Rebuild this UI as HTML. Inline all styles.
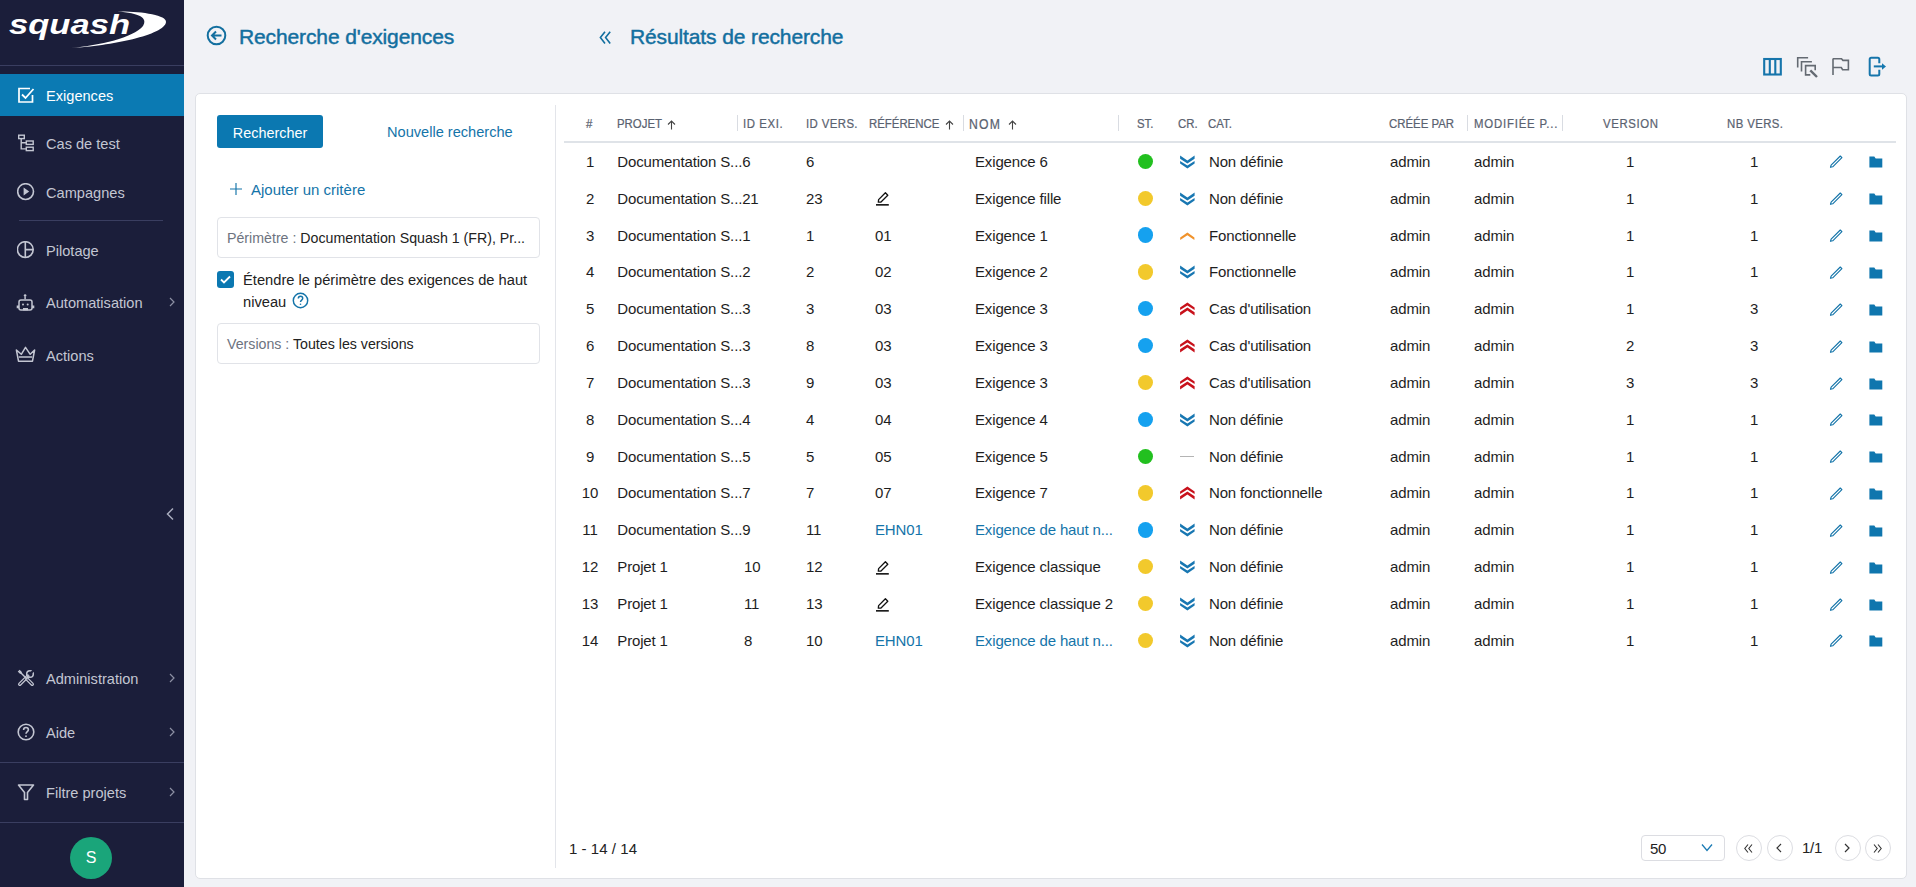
<!DOCTYPE html>
<html><head><meta charset="utf-8">
<style>
*{box-sizing:border-box;margin:0;padding:0}
html,body{width:1916px;height:887px;overflow:hidden;background:#f1f2f6;font-family:"Liberation Sans",sans-serif;}
.abs{position:absolute}
#side{position:absolute;left:0;top:0;width:184px;height:887px;background:#1b1e3a}
.sep{position:absolute;height:1px;background:#3a3e60}
.nav{position:absolute;left:0;width:184px;height:42px;color:#c3c6d2;font-size:14.6px}
.nav .t{position:absolute;left:46px;top:13.5px;white-space:nowrap}
.nav svg{position:absolute;left:17px;top:12px}
.nav .chev{position:absolute;left:167.5px;top:15px}
.nav.active{background:#0b7ab3;color:#fff}
.ttl{position:absolute;top:25px;font-size:21px;color:#136f9f;white-space:nowrap;letter-spacing:-0.12px;-webkit-text-stroke:0.45px #136f9f}
#card{position:absolute;left:195px;top:93px;width:1712px;height:786px;background:#fff;border:1px solid #dfe1e6;border-radius:5px}
.btn{position:absolute;left:217px;top:115px;width:106px;height:33px;background:#0b78b1;color:#fff;border-radius:3px;font-size:14.4px;text-align:center;line-height:36px}
.lnk{color:#1474a9}
.field{position:absolute;left:217px;width:323px;height:41px;border:1px solid #e1e3e8;border-radius:4px;font-size:14.2px;line-height:40px;padding-left:9px;white-space:nowrap;color:#222}
.field .lbl{color:#6d7380}
.hd{position:absolute;top:116.8px;font-size:11.4px;color:#5a6270;-webkit-text-stroke:0.2px #5a6270;white-space:nowrap;letter-spacing:0px;transform:scaleY(1.13);transform-origin:0 0}
.hsep{position:absolute;top:115px;width:1px;height:16px;background:#d9dce2}
.c{position:absolute;font-size:15px;color:#1e1e1e;white-space:nowrap;line-height:18px;letter-spacing:-0.15px}
.c.num{left:570px;width:40px;text-align:center}
.c.ctr{text-align:center}
.c.link{color:#1474a9}
.dot{position:absolute;width:15.4px;height:15.4px;border-radius:50%}
.ico{position:absolute}
.pgb{position:absolute;top:835px;width:26px;height:26px;border:1px solid #dcdde2;border-radius:50%}
</style></head>
<body>
<div id="side">
  <!-- logo -->
  <svg class="abs" style="left:0;top:0" width="184" height="65" viewBox="0 0 184 65">
    <text x="9" y="34" font-family="Liberation Sans" font-weight="bold" font-style="italic" font-size="27" fill="#fff" textLength="121" lengthAdjust="spacingAndGlyphs">squash</text>
    <path d="M71 48 C 110 46, 165 35, 166 22 C 167 15, 140 11, 117 11.5 C 140 13, 148 18, 143 26 C 133 38, 100 45, 71 48 Z" fill="#fff"/>
  </svg>
  <div class="sep" style="left:0;top:65px;width:184px"></div>

  <div class="nav active" style="top:74px">
    <svg width="18" height="18" viewBox="0 0 18 18"><path d="M13 2.5 H2 V16 H15.5 V9" fill="none" stroke="#fff" stroke-width="1.7"/><path d="M5 8.5 L8.5 12 L16.5 3" fill="none" stroke="#fff" stroke-width="1.8"/></svg>
    <span class="t">Exigences</span>
  </div>
  <div class="nav" style="top:122px">
    <svg width="18" height="18" viewBox="0 0 18 18" fill="none" stroke="#c3c6d2" stroke-width="1.4"><rect x="1.7" y="1.2" width="5.6" height="3.4"/><rect x="9.3" y="7" width="6.9" height="3.4"/><rect x="9.3" y="13.2" width="6.9" height="3.4"/><path d="M4.2 4.6 V14.9 H9.3 M4.2 8.7 H9.3"/></svg>
    <span class="t">Cas de test</span>
  </div>
  <div class="nav" style="top:171px">
    <svg width="18" height="18" viewBox="0 0 18 18"><circle cx="8.6" cy="8.6" r="7.9" fill="none" stroke="#c3c6d2" stroke-width="1.6"/><path d="M6.6 4.6 L12.2 8.6 L6.6 12.6 Z" fill="#c3c6d2"/></svg>
    <span class="t">Campagnes</span>
  </div>
  <div class="sep" style="left:19px;top:220px;width:144px"></div>
  <div class="nav" style="top:229px">
    <svg width="18" height="18" viewBox="0 0 18 18" fill="none" stroke="#c3c6d2" stroke-width="1.6"><circle cx="8.3" cy="8.6" r="7.9"/><path d="M8.3 0.7 V16.5 M8.3 8.6 H16.2"/></svg>
    <span class="t">Pilotage</span>
  </div>
  <div class="nav" style="top:281px">
    <svg style="left:15px;top:12px" width="21" height="20" viewBox="0 0 21 20" fill="none" stroke="#c3c6d2" stroke-width="1.5"><circle cx="10.1" cy="2.5" r="1.3" fill="#c3c6d2" stroke="none"/><path d="M10.1 3.5 V6.3"/><rect x="4" y="7" width="13" height="10" rx="2"/><path d="M1.7 12.6 H4 V15.2 H1.7 Z M17 12.6 H19.3 V15.2 H17 Z" fill="#c3c6d2" stroke="none"/><circle cx="8" cy="11.6" r="1" fill="#c3c6d2" stroke="none"/><circle cx="12.7" cy="11.6" r="1" fill="#c3c6d2" stroke="none"/><path d="M8 15 H13 V17.4 H8 Z" fill="#c3c6d2" stroke="none"/></svg>
    <span class="t">Automatisation</span>
    <svg class="chev" width="8" height="12" viewBox="0 0 8 12"><path d="M2 2 L6 6 L2 10" fill="none" stroke="#8d90a3" stroke-width="1.2"/></svg>
  </div>
  <div class="nav" style="top:334px">
    <svg style="left:15px;top:11px" width="21" height="18" viewBox="0 0 21 18" fill="none" stroke="#c3c6d2" stroke-width="1.5"><path d="M1.4 5 L6.3 9.3 L10.5 2.3 L15.2 9.3 L19.6 5 L17.5 16.2 H3.5 Z" stroke-linejoin="round"/><path d="M3.8 12 H17.2"/></svg>
    <span class="t">Actions</span>
  </div>

  <svg class="abs" style="left:164px;top:507px" width="12" height="14" viewBox="0 0 12 14"><path d="M9 1.5 L3.5 7 L9 12.5" fill="none" stroke="#a9acbd" stroke-width="1.5"/></svg>

  <div class="nav" style="top:657px">
    <svg width="18" height="18" viewBox="0 0 18 18" fill="none" stroke-linecap="round"><path d="M2.8 15.2 L10.8 7.2" stroke="#c3c6d2" stroke-width="3.6"/><path d="M2.8 15.2 L10.8 7.2" stroke="#1b1e3a" stroke-width="1.1"/><circle cx="13" cy="5" r="3.3" stroke="#c3c6d2" stroke-width="1.5"/><path d="M13.5 4.5 L17 1" stroke="#1b1e3a" stroke-width="2.2"/><path d="M10 10 L15.2 15.2" stroke="#c3c6d2" stroke-width="3.6"/><path d="M10 10 L15.2 15.2" stroke="#1b1e3a" stroke-width="1.1"/><path d="M3 3 L10 10" stroke="#c3c6d2" stroke-width="1.4"/><path d="M1.6 2.6 L2.6 1.6 L4.2 3.2 L3.2 4.2 Z" stroke="#c3c6d2" stroke-width="1.3"/></svg>
    <span class="t">Administration</span>
    <svg class="chev" width="8" height="12" viewBox="0 0 8 12"><path d="M2 2 L6 6 L2 10" fill="none" stroke="#8d90a3" stroke-width="1.2"/></svg>
  </div>
  <div class="nav" style="top:711px">
    <svg width="18" height="18" viewBox="0 0 18 18" fill="none" stroke="#c3c6d2" stroke-width="1.6"><circle cx="9" cy="9" r="7.8"/><path d="M6.6 7 C6.6 5.3 7.8 4.5 9 4.5 C10.4 4.5 11.4 5.5 11.4 6.8 C11.4 8.5 9 8.7 9 10.8"/><circle cx="9" cy="13.2" r="0.9" fill="#c3c6d2" stroke="none"/></svg>
    <span class="t">Aide</span>
    <svg class="chev" width="8" height="12" viewBox="0 0 8 12"><path d="M2 2 L6 6 L2 10" fill="none" stroke="#8d90a3" stroke-width="1.2"/></svg>
  </div>
  <div class="sep" style="left:0;top:762px;width:184px"></div>
  <div class="nav" style="top:771px">
    <svg width="18" height="18" viewBox="0 0 18 18" fill="none" stroke="#c3c6d2" stroke-width="1.6"><path d="M1.5 2 H16.5 L10.5 9.5 V16.5 H7.5 V9.5 Z" stroke-linejoin="round"/></svg>
    <span class="t">Filtre projets</span>
    <svg class="chev" width="8" height="12" viewBox="0 0 8 12"><path d="M2 2 L6 6 L2 10" fill="none" stroke="#8d90a3" stroke-width="1.2"/></svg>
  </div>
  <div class="sep" style="left:0;top:822px;width:184px"></div>
  <div class="abs" style="left:70px;top:837px;width:42px;height:42px;border-radius:50%;background:#1aa57a;color:#fff;font-size:16px;text-align:center;line-height:42px">S</div>
</div>

<!-- Titles -->
<svg class="abs" style="left:206px;top:25px" width="21" height="21" viewBox="0 0 21 21" fill="none" stroke="#136f9f" stroke-width="2"><circle cx="10.5" cy="10.5" r="8.8"/><path d="M15.5 10.5 H6.5 M10 6.5 L6 10.5 L10 14.5"/></svg>
<div class="ttl" style="left:239px">Recherche d'exigences</div>
<svg class="abs" style="left:598px;top:30px" width="15" height="15" viewBox="0 0 15 15" fill="none" stroke="#136f9f" stroke-width="1.6"><path d="M7 1.8 L2.4 7.6 L7 13.4 M12.2 1.8 L7.6 7.6 L12.2 13.4"/></svg>
<div class="ttl" style="left:630px">Résultats de recherche</div>

<!-- toolbar -->
<svg class="abs" style="left:1762px;top:56px" width="22" height="21" viewBox="0 0 22 21" fill="none" stroke="#1675ab" stroke-width="2.1"><rect x="2.2" y="3" width="16.6" height="15.5"/><path d="M7.8 3 V18.5 M13.3 3 V18.5"/></svg>
<svg class="abs" style="left:1795px;top:55px" width="24" height="24" viewBox="0 0 24 24" fill="none" stroke="#646a72" stroke-width="1.6"><path d="M2.7 12.5 V2.7 H13.1"/><path d="M6.5 16.4 V6.8 H16.9"/><path d="M15.3 19.9 H10.6 V10.6 H20.2 V15.3"/><path d="M15.3 15.3 L22 22" stroke-width="2.4"/></svg>
<svg class="abs" style="left:1830px;top:55px" width="22" height="22" viewBox="0 0 22 22" fill="none" stroke="#646a72" stroke-width="1.6"><path d="M3 20 V3.5"/><path d="M3 3.8 H11.5 L12.9 5.4 H18.4 V14.7 H12.6 L11.3 12.5 H3"/></svg>
<svg class="abs" style="left:1865px;top:55px" width="24" height="24" viewBox="0 0 24 24" fill="none" stroke="#1675ab" stroke-width="2"><path d="M14.3 8.2 V4.2 Q14.3 2.7 12.8 2.7 H6.2 Q4.7 2.7 4.7 4.2 V19 Q4.7 20.5 6.2 20.5 H12.8 Q14.3 20.5 14.3 19 V14.7"/><path d="M8.8 11.4 H18"/><path d="M17 8.2 L21 11.4 L17 14.7 Z" fill="#1478b0" stroke="none"/></svg>

<div id="card"></div>

<!-- left panel -->
<div class="btn">Rechercher</div>
<div class="abs lnk" style="left:387px;top:123.5px;font-size:14.6px;white-space:nowrap">Nouvelle recherche</div>
<svg class="abs" style="left:229px;top:182px" width="14" height="14" viewBox="0 0 14 14" stroke="#1474a9" stroke-width="1.15"><path d="M7 1 V13 M1 7 H13"/></svg>
<div class="abs lnk" style="left:251px;top:180.5px;font-size:15px;white-space:nowrap">Ajouter un critère</div>
<div class="field" style="top:217px"><span class="lbl">Périmètre : </span>Documentation Squash 1 (FR), Pr...</div>
<div class="abs" style="left:217px;top:271px;width:17px;height:17px;background:#0b78b1;border-radius:3px"></div>
<svg class="abs" style="left:217px;top:271px" width="17" height="17" viewBox="0 0 17 17"><path d="M4 8.5 L7 11.5 L13 5.5" fill="none" stroke="#fff" stroke-width="1.8"/></svg>
<div class="abs" style="left:243px;top:271.5px;font-size:14.7px;color:#222;white-space:nowrap">Étendre le périmètre des exigences de haut</div>
<div class="abs" style="left:243px;top:293.5px;font-size:14.7px;color:#222;white-space:nowrap">niveau</div>
<svg class="abs" style="left:292px;top:292px" width="17" height="17" viewBox="0 0 17 17" fill="none" stroke="#1474a9" stroke-width="1.45"><circle cx="8.5" cy="8.5" r="7.2"/><path d="M6.3 6.6 C6.3 5 7.4 4.3 8.5 4.3 C9.8 4.3 10.7 5.2 10.7 6.4 C10.7 8 8.5 8.2 8.5 10"/><circle cx="8.5" cy="12.3" r="0.8" fill="#1474a9" stroke="none"/></svg>
<div class="field" style="top:323px"><span class="lbl">Versions : </span>Toutes les versions</div>

<div class="abs" style="left:555px;top:105px;width:1px;height:763px;background:#e3e5ea"></div>

<!-- table header -->
<div class="hd" style="left:586px">#</div>
<div class="hd" style="left:617px">PROJET</div>
<svg class="abs" style="left:667px;top:119.5px" width="9" height="10" viewBox="0 0 9 10" fill="none" stroke="#444" stroke-width="1.1"><path d="M4.5 9.5 V1 M1 4.5 L4.5 1 L8 4.5"/></svg>
<div class="hsep" style="left:737px"></div>
<div class="hd" style="left:743px;letter-spacing:0.6px">ID EXI.</div>
<div class="hd" style="left:806px;letter-spacing:0.4px">ID VERS.</div>
<div class="hd" style="left:869px">RÉFÉRENCE</div>
<svg class="abs" style="left:945px;top:119.5px" width="9" height="10" viewBox="0 0 9 10" fill="none" stroke="#444" stroke-width="1.1"><path d="M4.5 9.5 V1 M1 4.5 L4.5 1 L8 4.5"/></svg>
<div class="hsep" style="left:963px"></div>
<div class="hd" style="left:969px;letter-spacing:1.2px;font-size:12.2px">NOM</div>
<svg class="abs" style="left:1008px;top:119.5px" width="9" height="10" viewBox="0 0 9 10" fill="none" stroke="#444" stroke-width="1.1"><path d="M4.5 9.5 V1 M1 4.5 L4.5 1 L8 4.5"/></svg>
<div class="hsep" style="left:1118px"></div>
<div class="hd" style="left:1137px">ST.</div>
<div class="hd" style="left:1178px">CR.</div>
<div class="hd" style="left:1208px">CAT.</div>
<div class="hd" style="left:1389px">CRÉÉE PAR</div>
<div class="hsep" style="left:1467px"></div>
<div class="hd" style="left:1474px;letter-spacing:0.8px">MODIFIÉE P...</div>
<div class="hsep" style="left:1562px"></div>
<div class="hd" style="left:1603px;letter-spacing:0.6px">VERSION</div>
<div class="hd" style="left:1727px;letter-spacing:0.4px">NB VERS.</div>
<div class="abs" style="left:564px;top:141px;width:1332px;height:2px;background:#dfe3e8"></div>

<div class="c num" style="top:152.8px">1</div>
<div class="c" style="left:617.3px;top:152.8px">Documentation S...6</div>
<div class="c" style="left:806px;top:152.8px">6</div>
<div class="c" style="left:975px;top:152.8px">Exigence 6</div>
<div class="dot" style="left:1138px;top:153.70000000000002px;background:#22c01f"></div>
<svg class="ico" style="left:1179px;top:154.8px" width="17" height="14" viewBox="0 0 17 14"><path d="M1.1 0.6 L8.4 5.5 L15.6 0.6 V3.7 L8.4 8.5 L1.1 3.7 Z M1.1 5.9 L8.4 10.6 L15.6 5.9 V8.6 L8.4 13.4 L1.1 8.6 Z" fill="#1877b2"/></svg>
<div class="c" style="left:1209px;top:152.8px">Non définie</div>
<div class="c" style="left:1390px;top:152.8px">admin</div>
<div class="c" style="left:1474px;top:152.8px">admin</div>
<div class="c ctr" style="left:1600px;width:60px;top:152.8px">1</div>
<div class="c ctr" style="left:1724px;width:60px;top:152.8px">1</div>
<svg class="ico" style="left:1828.5px;top:154.4px" width="14" height="14" viewBox="0 0 14 14"><path d="M1.5 13.3 L2.1 11.2 L11.3 2.0 L12.9 3.6 L3.7 12.8 Z" fill="none" stroke="#1474a9" stroke-width="1.15" stroke-linejoin="round"/></svg>
<svg class="ico" style="left:1868.5px;top:155.4px" width="14" height="13" viewBox="0 0 14 13"><path d="M0.4 1.6 H5.3 L6.7 3.6 H13.3 V12.4 H0.4 Z" fill="#0f76ae"/></svg>
<div class="c num" style="top:189.65px">2</div>
<div class="c" style="left:617.3px;top:189.65px">Documentation S...21</div>
<div class="c" style="left:806px;top:189.65px">23</div>
<svg class="ico" style="left:874px;top:190.25px" width="16" height="16" viewBox="0 0 16 16"><path d="M4.3 12.2 L4.6 9.6 L11.4 2.8 L13.8 5.2 L7 12 Z" fill="none" stroke="#111" stroke-width="1.3" stroke-linejoin="round"/><path d="M2 14.85 H14.8" stroke="#111" stroke-width="1.6"/></svg>
<div class="c" style="left:975px;top:189.65px">Exigence fille</div>
<div class="dot" style="left:1138px;top:190.55px;background:#f2c92c"></div>
<svg class="ico" style="left:1179px;top:191.65px" width="17" height="14" viewBox="0 0 17 14"><path d="M1.1 0.6 L8.4 5.5 L15.6 0.6 V3.7 L8.4 8.5 L1.1 3.7 Z M1.1 5.9 L8.4 10.6 L15.6 5.9 V8.6 L8.4 13.4 L1.1 8.6 Z" fill="#1877b2"/></svg>
<div class="c" style="left:1209px;top:189.65px">Non définie</div>
<div class="c" style="left:1390px;top:189.65px">admin</div>
<div class="c" style="left:1474px;top:189.65px">admin</div>
<div class="c ctr" style="left:1600px;width:60px;top:189.65px">1</div>
<div class="c ctr" style="left:1724px;width:60px;top:189.65px">1</div>
<svg class="ico" style="left:1828.5px;top:191.25px" width="14" height="14" viewBox="0 0 14 14"><path d="M1.5 13.3 L2.1 11.2 L11.3 2.0 L12.9 3.6 L3.7 12.8 Z" fill="none" stroke="#1474a9" stroke-width="1.15" stroke-linejoin="round"/></svg>
<svg class="ico" style="left:1868.5px;top:192.25px" width="14" height="13" viewBox="0 0 14 13"><path d="M0.4 1.6 H5.3 L6.7 3.6 H13.3 V12.4 H0.4 Z" fill="#0f76ae"/></svg>
<div class="c num" style="top:226.50000000000003px">3</div>
<div class="c" style="left:617.3px;top:226.50000000000003px">Documentation S...1</div>
<div class="c" style="left:806px;top:226.50000000000003px">1</div>
<div class="c" style="left:875px;top:226.50000000000003px">01</div>
<div class="c" style="left:975px;top:226.50000000000003px">Exigence 1</div>
<div class="dot" style="left:1138px;top:227.40000000000003px;background:#15a1ef"></div>
<svg class="ico" style="left:1179px;top:228.50000000000003px" width="17" height="14" viewBox="0 0 17 14"><path d="M1.2 8.6 L8.4 3.6 L15.4 8.6 V11 L8.4 6.2 L1.2 11 Z" fill="#f0922b"/></svg>
<div class="c" style="left:1209px;top:226.50000000000003px">Fonctionnelle</div>
<div class="c" style="left:1390px;top:226.50000000000003px">admin</div>
<div class="c" style="left:1474px;top:226.50000000000003px">admin</div>
<div class="c ctr" style="left:1600px;width:60px;top:226.50000000000003px">1</div>
<div class="c ctr" style="left:1724px;width:60px;top:226.50000000000003px">1</div>
<svg class="ico" style="left:1828.5px;top:228.10000000000002px" width="14" height="14" viewBox="0 0 14 14"><path d="M1.5 13.3 L2.1 11.2 L11.3 2.0 L12.9 3.6 L3.7 12.8 Z" fill="none" stroke="#1474a9" stroke-width="1.15" stroke-linejoin="round"/></svg>
<svg class="ico" style="left:1868.5px;top:229.10000000000002px" width="14" height="13" viewBox="0 0 14 13"><path d="M0.4 1.6 H5.3 L6.7 3.6 H13.3 V12.4 H0.4 Z" fill="#0f76ae"/></svg>
<div class="c num" style="top:263.35px">4</div>
<div class="c" style="left:617.3px;top:263.35px">Documentation S...2</div>
<div class="c" style="left:806px;top:263.35px">2</div>
<div class="c" style="left:875px;top:263.35px">02</div>
<div class="c" style="left:975px;top:263.35px">Exigence 2</div>
<div class="dot" style="left:1138px;top:264.25000000000006px;background:#f2c92c"></div>
<svg class="ico" style="left:1179px;top:265.35px" width="17" height="14" viewBox="0 0 17 14"><path d="M1.1 0.6 L8.4 5.5 L15.6 0.6 V3.7 L8.4 8.5 L1.1 3.7 Z M1.1 5.9 L8.4 10.6 L15.6 5.9 V8.6 L8.4 13.4 L1.1 8.6 Z" fill="#1877b2"/></svg>
<div class="c" style="left:1209px;top:263.35px">Fonctionnelle</div>
<div class="c" style="left:1390px;top:263.35px">admin</div>
<div class="c" style="left:1474px;top:263.35px">admin</div>
<div class="c ctr" style="left:1600px;width:60px;top:263.35px">1</div>
<div class="c ctr" style="left:1724px;width:60px;top:263.35px">1</div>
<svg class="ico" style="left:1828.5px;top:264.95000000000005px" width="14" height="14" viewBox="0 0 14 14"><path d="M1.5 13.3 L2.1 11.2 L11.3 2.0 L12.9 3.6 L3.7 12.8 Z" fill="none" stroke="#1474a9" stroke-width="1.15" stroke-linejoin="round"/></svg>
<svg class="ico" style="left:1868.5px;top:265.95000000000005px" width="14" height="13" viewBox="0 0 14 13"><path d="M0.4 1.6 H5.3 L6.7 3.6 H13.3 V12.4 H0.4 Z" fill="#0f76ae"/></svg>
<div class="c num" style="top:300.2px">5</div>
<div class="c" style="left:617.3px;top:300.2px">Documentation S...3</div>
<div class="c" style="left:806px;top:300.2px">3</div>
<div class="c" style="left:875px;top:300.2px">03</div>
<div class="c" style="left:975px;top:300.2px">Exigence 3</div>
<div class="dot" style="left:1138px;top:301.1px;background:#15a1ef"></div>
<svg class="ico" style="left:1179px;top:302.2px" width="17" height="14" viewBox="0 0 17 14"><path d="M1.1 13.4 L8.4 8.5 L15.6 13.4 V10.3 L8.4 5.5 L1.1 10.3 Z M1.1 8.1 L8.4 3.4 L15.6 8.1 V5.4 L8.4 0.6 L1.1 5.4 Z" fill="#c8111b"/></svg>
<div class="c" style="left:1209px;top:300.2px">Cas d&#39;utilisation</div>
<div class="c" style="left:1390px;top:300.2px">admin</div>
<div class="c" style="left:1474px;top:300.2px">admin</div>
<div class="c ctr" style="left:1600px;width:60px;top:300.2px">1</div>
<div class="c ctr" style="left:1724px;width:60px;top:300.2px">3</div>
<svg class="ico" style="left:1828.5px;top:301.8px" width="14" height="14" viewBox="0 0 14 14"><path d="M1.5 13.3 L2.1 11.2 L11.3 2.0 L12.9 3.6 L3.7 12.8 Z" fill="none" stroke="#1474a9" stroke-width="1.15" stroke-linejoin="round"/></svg>
<svg class="ico" style="left:1868.5px;top:302.8px" width="14" height="13" viewBox="0 0 14 13"><path d="M0.4 1.6 H5.3 L6.7 3.6 H13.3 V12.4 H0.4 Z" fill="#0f76ae"/></svg>
<div class="c num" style="top:337.04999999999995px">6</div>
<div class="c" style="left:617.3px;top:337.04999999999995px">Documentation S...3</div>
<div class="c" style="left:806px;top:337.04999999999995px">8</div>
<div class="c" style="left:875px;top:337.04999999999995px">03</div>
<div class="c" style="left:975px;top:337.04999999999995px">Exigence 3</div>
<div class="dot" style="left:1138px;top:337.95px;background:#15a1ef"></div>
<svg class="ico" style="left:1179px;top:339.04999999999995px" width="17" height="14" viewBox="0 0 17 14"><path d="M1.1 13.4 L8.4 8.5 L15.6 13.4 V10.3 L8.4 5.5 L1.1 10.3 Z M1.1 8.1 L8.4 3.4 L15.6 8.1 V5.4 L8.4 0.6 L1.1 5.4 Z" fill="#c8111b"/></svg>
<div class="c" style="left:1209px;top:337.04999999999995px">Cas d&#39;utilisation</div>
<div class="c" style="left:1390px;top:337.04999999999995px">admin</div>
<div class="c" style="left:1474px;top:337.04999999999995px">admin</div>
<div class="c ctr" style="left:1600px;width:60px;top:337.04999999999995px">2</div>
<div class="c ctr" style="left:1724px;width:60px;top:337.04999999999995px">3</div>
<svg class="ico" style="left:1828.5px;top:338.65px" width="14" height="14" viewBox="0 0 14 14"><path d="M1.5 13.3 L2.1 11.2 L11.3 2.0 L12.9 3.6 L3.7 12.8 Z" fill="none" stroke="#1474a9" stroke-width="1.15" stroke-linejoin="round"/></svg>
<svg class="ico" style="left:1868.5px;top:339.65px" width="14" height="13" viewBox="0 0 14 13"><path d="M0.4 1.6 H5.3 L6.7 3.6 H13.3 V12.4 H0.4 Z" fill="#0f76ae"/></svg>
<div class="c num" style="top:373.9px">7</div>
<div class="c" style="left:617.3px;top:373.9px">Documentation S...3</div>
<div class="c" style="left:806px;top:373.9px">9</div>
<div class="c" style="left:875px;top:373.9px">03</div>
<div class="c" style="left:975px;top:373.9px">Exigence 3</div>
<div class="dot" style="left:1138px;top:374.8px;background:#f2c92c"></div>
<svg class="ico" style="left:1179px;top:375.9px" width="17" height="14" viewBox="0 0 17 14"><path d="M1.1 13.4 L8.4 8.5 L15.6 13.4 V10.3 L8.4 5.5 L1.1 10.3 Z M1.1 8.1 L8.4 3.4 L15.6 8.1 V5.4 L8.4 0.6 L1.1 5.4 Z" fill="#c8111b"/></svg>
<div class="c" style="left:1209px;top:373.9px">Cas d&#39;utilisation</div>
<div class="c" style="left:1390px;top:373.9px">admin</div>
<div class="c" style="left:1474px;top:373.9px">admin</div>
<div class="c ctr" style="left:1600px;width:60px;top:373.9px">3</div>
<div class="c ctr" style="left:1724px;width:60px;top:373.9px">3</div>
<svg class="ico" style="left:1828.5px;top:375.5px" width="14" height="14" viewBox="0 0 14 14"><path d="M1.5 13.3 L2.1 11.2 L11.3 2.0 L12.9 3.6 L3.7 12.8 Z" fill="none" stroke="#1474a9" stroke-width="1.15" stroke-linejoin="round"/></svg>
<svg class="ico" style="left:1868.5px;top:376.5px" width="14" height="13" viewBox="0 0 14 13"><path d="M0.4 1.6 H5.3 L6.7 3.6 H13.3 V12.4 H0.4 Z" fill="#0f76ae"/></svg>
<div class="c num" style="top:410.75px">8</div>
<div class="c" style="left:617.3px;top:410.75px">Documentation S...4</div>
<div class="c" style="left:806px;top:410.75px">4</div>
<div class="c" style="left:875px;top:410.75px">04</div>
<div class="c" style="left:975px;top:410.75px">Exigence 4</div>
<div class="dot" style="left:1138px;top:411.65000000000003px;background:#15a1ef"></div>
<svg class="ico" style="left:1179px;top:412.75px" width="17" height="14" viewBox="0 0 17 14"><path d="M1.1 0.6 L8.4 5.5 L15.6 0.6 V3.7 L8.4 8.5 L1.1 3.7 Z M1.1 5.9 L8.4 10.6 L15.6 5.9 V8.6 L8.4 13.4 L1.1 8.6 Z" fill="#1877b2"/></svg>
<div class="c" style="left:1209px;top:410.75px">Non définie</div>
<div class="c" style="left:1390px;top:410.75px">admin</div>
<div class="c" style="left:1474px;top:410.75px">admin</div>
<div class="c ctr" style="left:1600px;width:60px;top:410.75px">1</div>
<div class="c ctr" style="left:1724px;width:60px;top:410.75px">1</div>
<svg class="ico" style="left:1828.5px;top:412.35px" width="14" height="14" viewBox="0 0 14 14"><path d="M1.5 13.3 L2.1 11.2 L11.3 2.0 L12.9 3.6 L3.7 12.8 Z" fill="none" stroke="#1474a9" stroke-width="1.15" stroke-linejoin="round"/></svg>
<svg class="ico" style="left:1868.5px;top:413.35px" width="14" height="13" viewBox="0 0 14 13"><path d="M0.4 1.6 H5.3 L6.7 3.6 H13.3 V12.4 H0.4 Z" fill="#0f76ae"/></svg>
<div class="c num" style="top:447.6px">9</div>
<div class="c" style="left:617.3px;top:447.6px">Documentation S...5</div>
<div class="c" style="left:806px;top:447.6px">5</div>
<div class="c" style="left:875px;top:447.6px">05</div>
<div class="c" style="left:975px;top:447.6px">Exigence 5</div>
<div class="dot" style="left:1138px;top:448.50000000000006px;background:#22c01f"></div>
<div class="ico" style="left:1180px;top:455.6px;width:14px;height:1.5px;background:#b4b4b4"></div>
<div class="c" style="left:1209px;top:447.6px">Non définie</div>
<div class="c" style="left:1390px;top:447.6px">admin</div>
<div class="c" style="left:1474px;top:447.6px">admin</div>
<div class="c ctr" style="left:1600px;width:60px;top:447.6px">1</div>
<div class="c ctr" style="left:1724px;width:60px;top:447.6px">1</div>
<svg class="ico" style="left:1828.5px;top:449.20000000000005px" width="14" height="14" viewBox="0 0 14 14"><path d="M1.5 13.3 L2.1 11.2 L11.3 2.0 L12.9 3.6 L3.7 12.8 Z" fill="none" stroke="#1474a9" stroke-width="1.15" stroke-linejoin="round"/></svg>
<svg class="ico" style="left:1868.5px;top:450.20000000000005px" width="14" height="13" viewBox="0 0 14 13"><path d="M0.4 1.6 H5.3 L6.7 3.6 H13.3 V12.4 H0.4 Z" fill="#0f76ae"/></svg>
<div class="c num" style="top:484.45000000000005px">10</div>
<div class="c" style="left:617.3px;top:484.45000000000005px">Documentation S...7</div>
<div class="c" style="left:806px;top:484.45000000000005px">7</div>
<div class="c" style="left:875px;top:484.45000000000005px">07</div>
<div class="c" style="left:975px;top:484.45000000000005px">Exigence 7</div>
<div class="dot" style="left:1138px;top:485.3500000000001px;background:#f2c92c"></div>
<svg class="ico" style="left:1179px;top:486.45000000000005px" width="17" height="14" viewBox="0 0 17 14"><path d="M1.1 13.4 L8.4 8.5 L15.6 13.4 V10.3 L8.4 5.5 L1.1 10.3 Z M1.1 8.1 L8.4 3.4 L15.6 8.1 V5.4 L8.4 0.6 L1.1 5.4 Z" fill="#c8111b"/></svg>
<div class="c" style="left:1209px;top:484.45000000000005px">Non fonctionnelle</div>
<div class="c" style="left:1390px;top:484.45000000000005px">admin</div>
<div class="c" style="left:1474px;top:484.45000000000005px">admin</div>
<div class="c ctr" style="left:1600px;width:60px;top:484.45000000000005px">1</div>
<div class="c ctr" style="left:1724px;width:60px;top:484.45000000000005px">1</div>
<svg class="ico" style="left:1828.5px;top:486.05000000000007px" width="14" height="14" viewBox="0 0 14 14"><path d="M1.5 13.3 L2.1 11.2 L11.3 2.0 L12.9 3.6 L3.7 12.8 Z" fill="none" stroke="#1474a9" stroke-width="1.15" stroke-linejoin="round"/></svg>
<svg class="ico" style="left:1868.5px;top:487.05000000000007px" width="14" height="13" viewBox="0 0 14 13"><path d="M0.4 1.6 H5.3 L6.7 3.6 H13.3 V12.4 H0.4 Z" fill="#0f76ae"/></svg>
<div class="c num" style="top:521.3px">11</div>
<div class="c" style="left:617.3px;top:521.3px">Documentation S...9</div>
<div class="c" style="left:806px;top:521.3px">11</div>
<div class="c link" style="left:875px;top:521.3px">EHN01</div>
<div class="c link" style="left:975px;top:521.3px">Exigence de haut n...</div>
<div class="dot" style="left:1138px;top:522.1999999999999px;background:#15a1ef"></div>
<svg class="ico" style="left:1179px;top:523.3px" width="17" height="14" viewBox="0 0 17 14"><path d="M1.1 0.6 L8.4 5.5 L15.6 0.6 V3.7 L8.4 8.5 L1.1 3.7 Z M1.1 5.9 L8.4 10.6 L15.6 5.9 V8.6 L8.4 13.4 L1.1 8.6 Z" fill="#1877b2"/></svg>
<div class="c" style="left:1209px;top:521.3px">Non définie</div>
<div class="c" style="left:1390px;top:521.3px">admin</div>
<div class="c" style="left:1474px;top:521.3px">admin</div>
<div class="c ctr" style="left:1600px;width:60px;top:521.3px">1</div>
<div class="c ctr" style="left:1724px;width:60px;top:521.3px">1</div>
<svg class="ico" style="left:1828.5px;top:522.9px" width="14" height="14" viewBox="0 0 14 14"><path d="M1.5 13.3 L2.1 11.2 L11.3 2.0 L12.9 3.6 L3.7 12.8 Z" fill="none" stroke="#1474a9" stroke-width="1.15" stroke-linejoin="round"/></svg>
<svg class="ico" style="left:1868.5px;top:523.9px" width="14" height="13" viewBox="0 0 14 13"><path d="M0.4 1.6 H5.3 L6.7 3.6 H13.3 V12.4 H0.4 Z" fill="#0f76ae"/></svg>
<div class="c num" style="top:558.15px">12</div>
<div class="c" style="left:617.3px;top:558.15px">Projet 1</div>
<div class="c" style="left:744px;top:558.15px">10</div>
<div class="c" style="left:806px;top:558.15px">12</div>
<svg class="ico" style="left:874px;top:558.75px" width="16" height="16" viewBox="0 0 16 16"><path d="M4.3 12.2 L4.6 9.6 L11.4 2.8 L13.8 5.2 L7 12 Z" fill="none" stroke="#111" stroke-width="1.3" stroke-linejoin="round"/><path d="M2 14.85 H14.8" stroke="#111" stroke-width="1.6"/></svg>
<div class="c" style="left:975px;top:558.15px">Exigence classique</div>
<div class="dot" style="left:1138px;top:559.05px;background:#f2c92c"></div>
<svg class="ico" style="left:1179px;top:560.15px" width="17" height="14" viewBox="0 0 17 14"><path d="M1.1 0.6 L8.4 5.5 L15.6 0.6 V3.7 L8.4 8.5 L1.1 3.7 Z M1.1 5.9 L8.4 10.6 L15.6 5.9 V8.6 L8.4 13.4 L1.1 8.6 Z" fill="#1877b2"/></svg>
<div class="c" style="left:1209px;top:558.15px">Non définie</div>
<div class="c" style="left:1390px;top:558.15px">admin</div>
<div class="c" style="left:1474px;top:558.15px">admin</div>
<div class="c ctr" style="left:1600px;width:60px;top:558.15px">1</div>
<div class="c ctr" style="left:1724px;width:60px;top:558.15px">1</div>
<svg class="ico" style="left:1828.5px;top:559.75px" width="14" height="14" viewBox="0 0 14 14"><path d="M1.5 13.3 L2.1 11.2 L11.3 2.0 L12.9 3.6 L3.7 12.8 Z" fill="none" stroke="#1474a9" stroke-width="1.15" stroke-linejoin="round"/></svg>
<svg class="ico" style="left:1868.5px;top:560.75px" width="14" height="13" viewBox="0 0 14 13"><path d="M0.4 1.6 H5.3 L6.7 3.6 H13.3 V12.4 H0.4 Z" fill="#0f76ae"/></svg>
<div class="c num" style="top:595.0px">13</div>
<div class="c" style="left:617.3px;top:595.0px">Projet 1</div>
<div class="c" style="left:744px;top:595.0px">11</div>
<div class="c" style="left:806px;top:595.0px">13</div>
<svg class="ico" style="left:874px;top:595.6px" width="16" height="16" viewBox="0 0 16 16"><path d="M4.3 12.2 L4.6 9.6 L11.4 2.8 L13.8 5.2 L7 12 Z" fill="none" stroke="#111" stroke-width="1.3" stroke-linejoin="round"/><path d="M2 14.85 H14.8" stroke="#111" stroke-width="1.6"/></svg>
<div class="c" style="left:975px;top:595.0px">Exigence classique 2</div>
<div class="dot" style="left:1138px;top:595.9px;background:#f2c92c"></div>
<svg class="ico" style="left:1179px;top:597.0px" width="17" height="14" viewBox="0 0 17 14"><path d="M1.1 0.6 L8.4 5.5 L15.6 0.6 V3.7 L8.4 8.5 L1.1 3.7 Z M1.1 5.9 L8.4 10.6 L15.6 5.9 V8.6 L8.4 13.4 L1.1 8.6 Z" fill="#1877b2"/></svg>
<div class="c" style="left:1209px;top:595.0px">Non définie</div>
<div class="c" style="left:1390px;top:595.0px">admin</div>
<div class="c" style="left:1474px;top:595.0px">admin</div>
<div class="c ctr" style="left:1600px;width:60px;top:595.0px">1</div>
<div class="c ctr" style="left:1724px;width:60px;top:595.0px">1</div>
<svg class="ico" style="left:1828.5px;top:596.6px" width="14" height="14" viewBox="0 0 14 14"><path d="M1.5 13.3 L2.1 11.2 L11.3 2.0 L12.9 3.6 L3.7 12.8 Z" fill="none" stroke="#1474a9" stroke-width="1.15" stroke-linejoin="round"/></svg>
<svg class="ico" style="left:1868.5px;top:597.6px" width="14" height="13" viewBox="0 0 14 13"><path d="M0.4 1.6 H5.3 L6.7 3.6 H13.3 V12.4 H0.4 Z" fill="#0f76ae"/></svg>
<div class="c num" style="top:631.85px">14</div>
<div class="c" style="left:617.3px;top:631.85px">Projet 1</div>
<div class="c" style="left:744px;top:631.85px">8</div>
<div class="c" style="left:806px;top:631.85px">10</div>
<div class="c link" style="left:875px;top:631.85px">EHN01</div>
<div class="c link" style="left:975px;top:631.85px">Exigence de haut n...</div>
<div class="dot" style="left:1138px;top:632.75px;background:#f2c92c"></div>
<svg class="ico" style="left:1179px;top:633.85px" width="17" height="14" viewBox="0 0 17 14"><path d="M1.1 0.6 L8.4 5.5 L15.6 0.6 V3.7 L8.4 8.5 L1.1 3.7 Z M1.1 5.9 L8.4 10.6 L15.6 5.9 V8.6 L8.4 13.4 L1.1 8.6 Z" fill="#1877b2"/></svg>
<div class="c" style="left:1209px;top:631.85px">Non définie</div>
<div class="c" style="left:1390px;top:631.85px">admin</div>
<div class="c" style="left:1474px;top:631.85px">admin</div>
<div class="c ctr" style="left:1600px;width:60px;top:631.85px">1</div>
<div class="c ctr" style="left:1724px;width:60px;top:631.85px">1</div>
<svg class="ico" style="left:1828.5px;top:633.45px" width="14" height="14" viewBox="0 0 14 14"><path d="M1.5 13.3 L2.1 11.2 L11.3 2.0 L12.9 3.6 L3.7 12.8 Z" fill="none" stroke="#1474a9" stroke-width="1.15" stroke-linejoin="round"/></svg>
<svg class="ico" style="left:1868.5px;top:634.45px" width="14" height="13" viewBox="0 0 14 13"><path d="M0.4 1.6 H5.3 L6.7 3.6 H13.3 V12.4 H0.4 Z" fill="#0f76ae"/></svg>

<!-- footer -->
<div class="abs" style="left:569px;top:840px;font-size:15px;color:#222;white-space:nowrap;letter-spacing:0.05px">1 - 14 / 14</div>
<div class="abs" style="left:1641px;top:835px;width:84px;height:26px;border:1px solid #dcdde2;border-radius:4px"></div>
<div class="abs" style="left:1650px;top:840px;font-size:15px;color:#222;letter-spacing:-0.3px">50</div>
<svg class="abs" style="left:1701px;top:843px" width="12" height="9" viewBox="0 0 12 9" fill="none" stroke="#1a7ab4" stroke-width="1.3"><path d="M1 1.5 L6 7.5 L11 1.5"/></svg>
<div class="pgb" style="left:1736px"></div>
<svg class="abs" style="left:1743px;top:843px" width="11" height="11" viewBox="0 0 11 11" fill="none" stroke="#333" stroke-width="1.1"><path d="M5 1.5 L1.8 5.5 L5 9.5 M9 1.5 L5.8 5.5 L9 9.5"/></svg>
<div class="pgb" style="left:1767px"></div>
<svg class="abs" style="left:1774px;top:843px" width="10" height="10" viewBox="0 0 10 10" fill="none" stroke="#333" stroke-width="1.2"><path d="M7 1 L3 5 L7 9"/></svg>
<div class="abs" style="left:1802px;top:839px;font-size:15px;color:#222;letter-spacing:-0.3px">1/1</div>
<div class="pgb" style="left:1835px"></div>
<svg class="abs" style="left:1842px;top:843px" width="10" height="10" viewBox="0 0 10 10" fill="none" stroke="#333" stroke-width="1.2"><path d="M3 1 L7 5 L3 9"/></svg>
<div class="pgb" style="left:1865px"></div>
<svg class="abs" style="left:1872px;top:843px" width="11" height="11" viewBox="0 0 11 11" fill="none" stroke="#333" stroke-width="1.1"><path d="M2 1.5 L5.2 5.5 L2 9.5 M6 1.5 L9.2 5.5 L6 9.5"/></svg>
</body></html>
